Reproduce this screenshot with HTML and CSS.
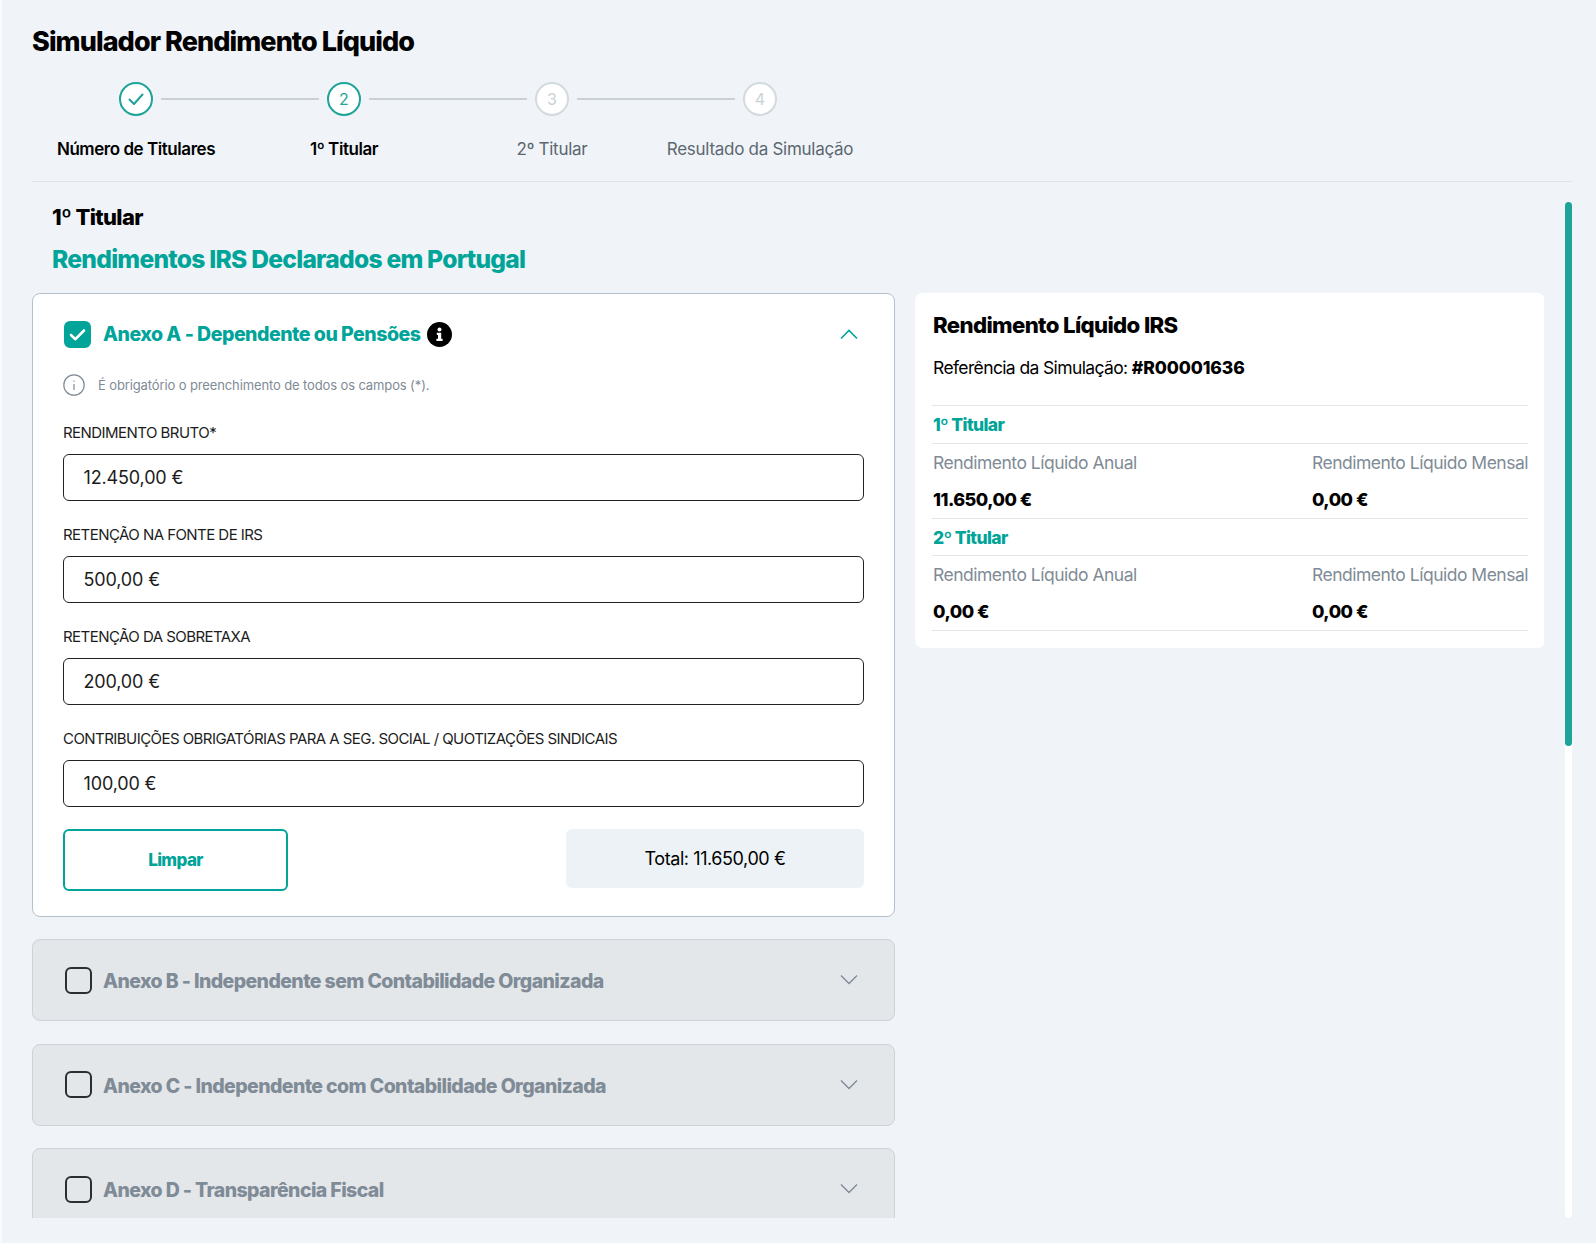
FILE: index.html
```html
<!DOCTYPE html>
<html lang="pt">
<head>
  <meta charset="UTF-8">
  <title>Simulador Rendimento Líquido</title>
  <link rel="stylesheet" href="styles.css">
</head>
<body>
  <main class="page">
    <h1 class="page-title">Simulador Rendimento Líquido</h1>

    <ol class="stepper">
      <li class="step done">
        <div class="step-track">
          <span class="step-line hidden"></span>
          <span class="step-circle">
            <svg width="20" height="20" viewBox="0 0 20 20" fill="none" stroke="#1fa398" stroke-width="2" stroke-linecap="round" stroke-linejoin="round"><path d="M3.5 10.5l4.5 4.5 8.5-9.5"/></svg>
          </span>
          <span class="step-line"></span>
        </div>
        <span class="step-label">Número de Titulares</span>
      </li>
      <li class="step current">
        <div class="step-track">
          <span class="step-line"></span>
          <span class="step-circle">2</span>
          <span class="step-line"></span>
        </div>
        <span class="step-label">1º Titular</span>
      </li>
      <li class="step">
        <div class="step-track">
          <span class="step-line"></span>
          <span class="step-circle">3</span>
          <span class="step-line"></span>
        </div>
        <span class="step-label">2º Titular</span>
      </li>
      <li class="step">
        <div class="step-track">
          <span class="step-line"></span>
          <span class="step-circle">4</span>
          <span class="step-line hidden"></span>
        </div>
        <span class="step-label">Resultado da Simulação</span>
      </li>
    </ol>

    <div class="scroll-area">
      <div class="scroll-content">
        <h2 class="holder-title">1º Titular</h2>
        <h3 class="section-title">Rendimentos IRS Declarados em Portugal</h3>

        <div class="columns">
          <div class="annexes">
            <section class="annex open">
              <header class="annex-head">
                <span class="check checked">
                  <svg width="19" height="19" viewBox="0 0 19 19" fill="none" stroke="#fff" stroke-width="2.6" stroke-linecap="round" stroke-linejoin="round"><path d="M3 10l4.4 4.2L16 5.5"/></svg>
                </span>
                <span class="annex-title">Anexo A - Dependente ou Pensões</span>
                <svg class="info-solid" width="25" height="25" viewBox="0 0 25 25"><circle cx="12.5" cy="12.5" r="12.5" fill="#000"/><circle cx="12.5" cy="7.6" r="2" fill="#fff"/><path d="M9.8 10.8h4.4v6h1.4v2.2H9.4v-2.2h1.6v-3.8H9.8z" fill="#fff"/></svg>
                <svg class="chevron" width="20" height="12" viewBox="0 0 20 12" fill="none" stroke="#00a499" stroke-width="1.6"><path d="M2 10.5l8-8 8 8"/></svg>
              </header>

              <p class="note">
                <svg width="22" height="22" viewBox="0 0 22 22" fill="none" stroke="#7f8b96" stroke-width="1.2"><circle cx="11" cy="11" r="10.2"/><path d="M11 10v6M11 6.4v1.4"/></svg>
                É obrigatório o preenchimento de todos os campos (*).
              </p>

              <div class="field">
                <label>RENDIMENTO BRUTO*</label>
                <div class="input">12.450,00 €</div>
              </div>
              <div class="field">
                <label>RETENÇÃO NA FONTE DE IRS</label>
                <div class="input">500,00 €</div>
              </div>
              <div class="field">
                <label>RETENÇÃO DA SOBRETAXA</label>
                <div class="input">200,00 €</div>
              </div>
              <div class="field">
                <label>CONTRIBUIÇÕES OBRIGATÓRIAS PARA A SEG. SOCIAL / QUOTIZAÇÕES SINDICAIS</label>
                <div class="input">100,00 €</div>
              </div>

              <div class="annex-foot">
                <button class="btn-clear" type="button">Limpar</button>
                <div class="total">Total: 11.650,00 €</div>
              </div>
            </section>

            <section class="annex closed">
              <header class="annex-head">
                <span class="check"></span>
                <span class="annex-title">Anexo B - Independente sem Contabilidade Organizada</span>
                <svg class="chevron" width="20" height="12" viewBox="0 0 20 12" fill="none" stroke="#7f8b96" stroke-width="1.4"><path d="M2 1.5l8 8 8-8"/></svg>
              </header>
            </section>
            <section class="annex closed">
              <header class="annex-head">
                <span class="check"></span>
                <span class="annex-title">Anexo C - Independente com Contabilidade Organizada</span>
                <svg class="chevron" width="20" height="12" viewBox="0 0 20 12" fill="none" stroke="#7f8b96" stroke-width="1.4"><path d="M2 1.5l8 8 8-8"/></svg>
              </header>
            </section>
            <section class="annex closed">
              <header class="annex-head">
                <span class="check"></span>
                <span class="annex-title">Anexo D - Transparência Fiscal</span>
                <svg class="chevron" width="20" height="12" viewBox="0 0 20 12" fill="none" stroke="#7f8b96" stroke-width="1.4"><path d="M2 1.5l8 8 8-8"/></svg>
              </header>
            </section>
          </div>

          <aside class="summary">
            <h3 class="summary-title">Rendimento Líquido IRS</h3>
            <p class="summary-ref">Referência da Simulação: <strong>#R00001636</strong></p>

            <h4 class="summary-holder first">1º Titular</h4>
            <div class="summary-row">
              <div>
                <span class="summary-label">Rendimento Líquido Anual</span>
                <strong class="summary-value">11.650,00 €</strong>
              </div>
              <div>
                <span class="summary-label">Rendimento Líquido Mensal</span>
                <strong class="summary-value">0,00 €</strong>
              </div>
            </div>

            <h4 class="summary-holder">2º Titular</h4>
            <div class="summary-row">
              <div>
                <span class="summary-label">Rendimento Líquido Anual</span>
                <strong class="summary-value">0,00 €</strong>
              </div>
              <div>
                <span class="summary-label">Rendimento Líquido Mensal</span>
                <strong class="summary-value">0,00 €</strong>
              </div>
            </div>
          </aside>
        </div>
      </div>

      <div class="scrollbar"><div class="scrollbar-thumb"></div></div>
    </div>
  </main>
</body>
</html>
```

FILE: styles.css
```css
* {
  box-sizing: border-box;
}
html, body {
  height: 100%;
}
body {
  margin: 0;
  background: #f0f4f8;
  color: #000;
  font-family: Inter, "Noto Sans", sans-serif;
  overflow: hidden;
}
.page {
  height: 1243px;
  padding: 0 24px 25px 32px;
  border-left: 2px solid #f8fafc;
  display: flex;
  flex-direction: column;
}
.page-title {
  margin: 24px 0 0 -2px;
  font-size: 27px;
  line-height: 36px;
  font-weight: 800;
  letter-spacing: -0.93px;
}

/* stepper */
.stepper {
  list-style: none;
  margin: 22px 0 0 -2px;
  padding: 0 0 20px;
  display: flex;
  border-bottom: 1px solid #dfe4e9;
}
.step {
  width: 208px;
  display: flex;
  flex-direction: column;
  align-items: center;
}
.step-track {
  width: 100%;
  display: flex;
  align-items: center;
}
.step-line {
  flex: 1;
  height: 2px;
  margin-bottom: 1px;
  background: #c9d1d6;
}
.step-line.hidden {
  visibility: hidden;
}
.step-circle {
  width: 34px;
  height: 34px;
  margin: 0 8px;
  border-radius: 50%;
  border: 2px solid #d3dade;
  background: #fff;
  color: #c9d1d6;
  font-size: 16px;
  display: flex;
  align-items: center;
  justify-content: center;
}
.step.done .step-circle,
.step.current .step-circle {
  border-color: #1fa398;
  color: #1fa398;
}
.step-label {
  margin-top: 21px;
  font-size: 17px;
  line-height: 24px;
  letter-spacing: -0.28px;
  color: #5c6770;
  white-space: nowrap;
}
.step.done .step-label,
.step.current .step-label {
  color: #000;
  font-weight: 600;
  letter-spacing: -0.45px;
}

/* scroll area */
.scroll-area {
  flex: 1;
  min-height: 0;
  margin-left: -2px;
  display: flex;
  gap: 21px;
}
.scroll-content {
  flex: 1;
  min-width: 0;
  overflow: hidden;
}
.scrollbar {
  width: 7px;
  margin-top: 20px;
  background: #fff;
  border-radius: 4px;
}
.scrollbar-thumb {
  height: 544px;
  background: #1fa398;
  border-radius: 4px;
}
.holder-title {
  margin: 20px 0 0 20px;
  font-size: 22px;
  line-height: 30px;
  font-weight: 800;
  letter-spacing: -0.65px;
}
.section-title {
  margin: 11px 0 0 20px;
  font-size: 24.6px;
  line-height: 32px;
  font-weight: 800;
  letter-spacing: -0.74px;
  color: #00a499;
}
.columns {
  margin-top: 18px;
  display: flex;
  align-items: flex-start;
  gap: 20px;
}
.annexes {
  width: 863px;
  flex: none;
  display: flex;
  flex-direction: column;
  gap: 22px;
}

/* annex cards */
.annex {
  border: 1px solid #b4c0cb;
  border-radius: 8px;
  background: #fff;
}
.annex.open {
  height: 624px;
  padding: 26px 30px 0;
}
.annex.closed {
  height: 82px;
  padding: 26px 35px 0 32px;
  background: #e4e7ea;
  border-color: #cdd2d7;
}
.annex.closed + .annex.closed {
  margin-top: 0.5px;
}
.annex-head {
  display: flex;
  align-items: center;
  height: 28px;
}
.check {
  width: 27px;
  height: 27px;
  flex: none;
  border: 2px solid #2b2f33;
  border-radius: 6px;
  display: flex;
  align-items: center;
  justify-content: center;
}
.check.checked {
  margin-left: 1px;
  background: #00a499;
  border-color: #00a499;
}
.annex-title {
  margin-left: 12px;
  font-size: 19.5px;
  font-weight: 800;
  letter-spacing: -0.49px;
  color: #00a499;
  white-space: nowrap;
}
.annex.closed .annex-title {
  margin-left: 11px;
  margin-top: 2px;
  letter-spacing: -0.6px;
  color: #7f8b96;
}
.info-solid {
  margin-left: 7px;
  flex: none;
}
.chevron {
  margin-left: auto;
  flex: none;
}
.annex.open .chevron {
  margin-right: 5px;
}
.note {
  margin: 26px 0 0;
  display: flex;
  align-items: center;
  gap: 13px;
  height: 22px;
  font-size: 13px;
  letter-spacing: -0.12px;
  color: #7f8b96;
}
.field {
  height: 102px;
  padding-top: 21px;
}
.note + .field {
  margin-top: 6px;
}
.field label {
  display: block;
  font-size: 15px;
  line-height: 20px;
  letter-spacing: -0.55px;
  color: #1c1c1c;
}
.input {
  height: 47px;
  margin-top: 11px;
  padding: 0 19.5px;
  border: 1px solid #222;
  border-radius: 6px;
  background: #fff;
  font-size: 18px;
  letter-spacing: -0.15px;
  line-height: 45px;
  color: #1c1c1c;
}
.annex-foot {
  margin-top: 19px;
  display: flex;
  justify-content: space-between;
  align-items: flex-start;
}
.btn-clear {
  width: 225px;
  height: 62px;
  border: 2px solid #00a499;
  border-radius: 6px;
  background: #fff;
  color: #00a499;
  font-family: inherit;
  font-size: 17px;
  font-weight: 800;
  letter-spacing: -0.6px;
}
.total {
  width: 298px;
  height: 59px;
  border-radius: 6px;
  background: #ecf2f5;
  font-size: 18px;
  letter-spacing: -0.42px;
  display: flex;
  align-items: center;
  justify-content: center;
}

/* summary */
.summary {
  width: 630px;
  flex: none;
  height: 355px;
  padding: 16px 17px 0 17px;
  background: #fff;
  border-radius: 8px;
}
.summary-title {
  margin: 0 0 0 1px;
  font-size: 22.2px;
  line-height: 32px;
  font-weight: 800;
  letter-spacing: -0.65px;
}
.summary-ref {
  margin: 15px 0 0 1px;
  font-size: 17.5px;
  line-height: 24px;
  letter-spacing: -0.62px;
}
.summary-ref strong {
  font-weight: 800;
  letter-spacing: -0.1px;
}
.summary-holder {
  margin: 0;
  height: 37px;
  padding-left: 1px;
  border-bottom: 1px solid #e1e6e9;
  font-size: 17.5px;
  line-height: 37px;
  font-weight: 800;
  letter-spacing: -0.62px;
  color: #00a499;
}
.summary-holder.first {
  margin-top: 25px;
  border-top: 1px solid #e1e6e9;
  height: 39px;
  line-height: 38px;
}
.summary-row {
  display: flex;
  justify-content: space-between;
  height: 75px;
  padding-top: 7px;
  border-bottom: 1px solid #e1e6e9;
}
.summary-label {
  display: block;
  padding-left: 1px;
  font-size: 17.5px;
  line-height: 24px;
  letter-spacing: -0.5px;
  color: #7f8b96;
}
.summary-value {
  display: block;
  margin-top: 13px;
  padding-left: 1px;
  font-size: 18px;
  line-height: 24px;
  font-weight: 800;
  letter-spacing: -0.5px;
}
```
